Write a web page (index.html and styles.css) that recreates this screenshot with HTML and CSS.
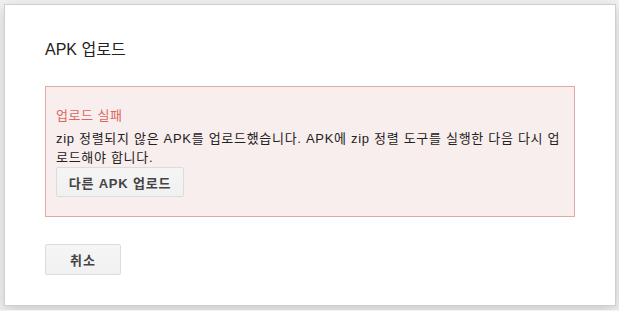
FILE: index.html
```html
<!DOCTYPE html>
<html lang="ko">
<head>
<meta charset="utf-8">
<title>APK 업로드</title>
<link rel="stylesheet" href="styles.css">
</head>
<body>
<div class="dialog">
  <h1 class="title">APK 업로드</h1>
  <div class="error-box">
    <div class="error-title">업로드 실패</div>
    <p class="error-text">zip 정렬되지 않은 APK를 업로드했습니다. APK에 zip 정렬 도구를 실행한 다음 다시 업로드해야 합니다.</p>
    <button class="btn btn-inner">다른 APK 업로드</button>
  </div>
  <div class="actions">
    <button class="btn btn-cancel">취소</button>
  </div>
</div>
</body>
</html>
```
FILE: styles.css
```css
html, body {
  margin: 0;
  padding: 0;
}
body {
  background: #f2f2f2;
  padding: 4px;
  font-family: "Liberation Sans", "Noto Sans CJK KR", Arial, sans-serif;
  color: #222;
}
.dialog {
  width: 530px;
  background: #fff;
  border: 1px solid #cfcfcf;
  box-shadow: 0 4px 14px rgba(0, 0, 0, 0.18);
  padding: 35px 40px 30px 40px;
}
.title {
  margin: 0;
  font-size: 16px;
  font-weight: normal;
  line-height: 20px;
  color: #222;
}
.error-box {
  margin-top: 26px;
  height: 129px;
  box-sizing: content-box;
  background: #f9eeee;
  border: 1px solid #e2a9a9;
  padding: 0 10px;
  display: flex;
  flex-direction: column;
  align-items: flex-start;
}
.error-title {
  margin-top: 19px;
  font-size: 13px;
  line-height: 19px;
  letter-spacing: 0.5px;
  color: #dd6660;
}
.error-text {
  margin: 4px 0 0 0;
  font-size: 13px;
  line-height: 19px;
  letter-spacing: 0.7px;
  color: #222;
}
.btn {
  font-family: "Liberation Sans", "Noto Sans CJK KR", Arial, sans-serif;
  font-size: 13px;
  font-weight: bold;
  color: #444;
  background: linear-gradient(#f5f5f5, #f1f1f1);
  border: 1px solid #dcdcdc;
  border-radius: 2px;
  padding: 0;
  margin: 0;
}
.btn-inner {
  width: 128px;
  height: 30px;
  letter-spacing: 0.8px;
}
.actions {
  margin-top: 27px;
  display: flex;
}
.btn-cancel {
  width: 76px;
  height: 31px;
  letter-spacing: 1px;
}
```
